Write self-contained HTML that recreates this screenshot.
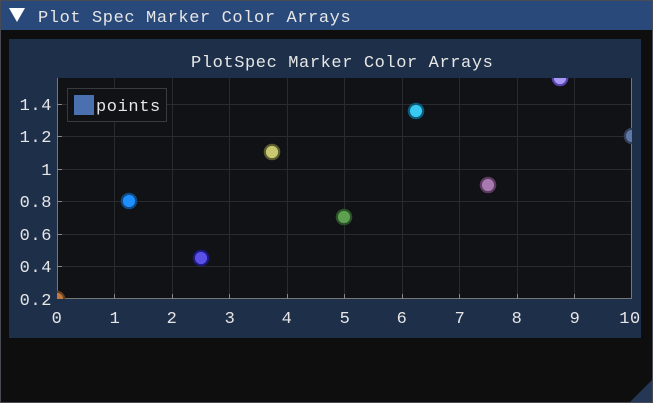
<!DOCTYPE html>
<html><head><style>
html,body{margin:0;padding:0;background:#0d0d0d;}
svg{display:block;}
text{font-family:"Liberation Mono","DejaVu Sans Mono",monospace;font-size:17px;fill:#e6e6e6;letter-spacing:0.6px;}
</style></head><body>
<svg width="653" height="403" viewBox="0 0 653 403" xmlns="http://www.w3.org/2000/svg">
<rect x="0" y="0" width="653" height="403" fill="#0e0e0e"/>
<rect x="0.5" y="0.5" width="652" height="402" fill="none" stroke="#4a4a55"/>
<rect x="1" y="1" width="651" height="29" fill="#29497a"/>
<polygon points="9,8 25,8 17,22" fill="#ffffff"/>
<text x="38" y="22">Plot Spec Marker Color Arrays</text>
<rect x="9" y="39" width="632" height="299" fill="#1e2f4a"/>
<text x="191" y="67">PlotSpec Marker Color Arrays</text>
<rect x="57" y="78" width="575" height="221" fill="#111215"/>
<g stroke="#2a2b2e" stroke-width="1">
<line x1="114.5" y1="78" x2="114.5" y2="299"/><line x1="172.5" y1="78" x2="172.5" y2="299"/>
<line x1="229.5" y1="78" x2="229.5" y2="299"/><line x1="287.5" y1="78" x2="287.5" y2="299"/>
<line x1="344.5" y1="78" x2="344.5" y2="299"/><line x1="402.5" y1="78" x2="402.5" y2="299"/>
<line x1="459.5" y1="78" x2="459.5" y2="299"/><line x1="517.5" y1="78" x2="517.5" y2="299"/>
<line x1="574.5" y1="78" x2="574.5" y2="299"/>
<line x1="57" y1="104.5" x2="632" y2="104.5"/><line x1="57" y1="136.5" x2="632" y2="136.5"/>
<line x1="57" y1="169.5" x2="632" y2="169.5"/><line x1="57" y1="201.5" x2="632" y2="201.5"/>
<line x1="57" y1="234.5" x2="632" y2="234.5"/><line x1="57" y1="266.5" x2="632" y2="266.5"/>
</g>
<g stroke="#777" stroke-width="1">
<line x1="57" y1="298.5" x2="632" y2="298.5"/><line x1="631.5" y1="78" x2="631.5" y2="299"/>
<line x1="57.5" y1="78" x2="57.5" y2="299"/>
</g>
<g stroke="#888" stroke-width="1">
<line x1="114.5" y1="294" x2="114.5" y2="299"/><line x1="172.5" y1="294" x2="172.5" y2="299"/>
<line x1="229.5" y1="294" x2="229.5" y2="299"/><line x1="287.5" y1="294" x2="287.5" y2="299"/>
<line x1="344.5" y1="294" x2="344.5" y2="299"/><line x1="402.5" y1="294" x2="402.5" y2="299"/>
<line x1="459.5" y1="294" x2="459.5" y2="299"/><line x1="517.5" y1="294" x2="517.5" y2="299"/>
<line x1="574.5" y1="294" x2="574.5" y2="299"/>
<line x1="57" y1="104.5" x2="62" y2="104.5"/><line x1="57" y1="136.5" x2="62" y2="136.5"/>
<line x1="57" y1="169.5" x2="62" y2="169.5"/><line x1="57" y1="201.5" x2="62" y2="201.5"/>
<line x1="57" y1="234.5" x2="62" y2="234.5"/><line x1="57" y1="266.5" x2="62" y2="266.5"/>
</g>
<clipPath id="c"><rect x="57" y="78" width="575" height="221"/></clipPath>
<g clip-path="url(#c)" stroke-width="2.2">
<circle cx="57" cy="299" r="7.2" fill="#c07a40" stroke="#6a4020"/>
<circle cx="129" cy="201" r="7.2" fill="#1e8fff" stroke="#104a80"/>
<circle cx="201" cy="258" r="7.2" fill="#5a50e8" stroke="#1c1880"/>
<circle cx="272" cy="152" r="7.2" fill="#c8c870" stroke="#5a5a30"/>
<circle cx="344" cy="217" r="7.2" fill="#5ca050" stroke="#2a5028"/>
<circle cx="416" cy="111" r="7.2" fill="#38c8f0" stroke="#0a5a78"/>
<circle cx="488" cy="185" r="7.2" fill="#a878b0" stroke="#5a3a5e"/>
<circle cx="560" cy="78" r="7.2" fill="#a898f8" stroke="#5a40b0"/>
<circle cx="632" cy="136" r="7.2" fill="#6078a8" stroke="#34405a"/>
</g>
<rect x="67.5" y="88.5" width="99" height="33" fill="#111215" stroke="#3a3b40"/>
<rect x="74" y="95" width="20" height="20" fill="#4a70b0"/>
<text x="96" y="111">points</text>
<g text-anchor="end">
<text x="52" y="110">1.4</text><text x="52" y="142">1.2</text>
<text x="52" y="175">1</text><text x="52" y="207">0.8</text>
<text x="52" y="240">0.6</text><text x="52" y="272">0.4</text>
<text x="52" y="305">0.2</text>
</g>
<g text-anchor="middle">
<text x="57" y="323">0</text><text x="115" y="323">1</text><text x="172" y="323">2</text>
<text x="230" y="323">3</text><text x="287" y="323">4</text><text x="345" y="323">5</text>
<text x="402" y="323">6</text><text x="460" y="323">7</text><text x="517" y="323">8</text>
<text x="575" y="323">9</text><text x="630" y="323">10</text>
</g>
<polygon points="652,380 652,402 630,402" fill="#243856"/>
</svg>
</body></html>
